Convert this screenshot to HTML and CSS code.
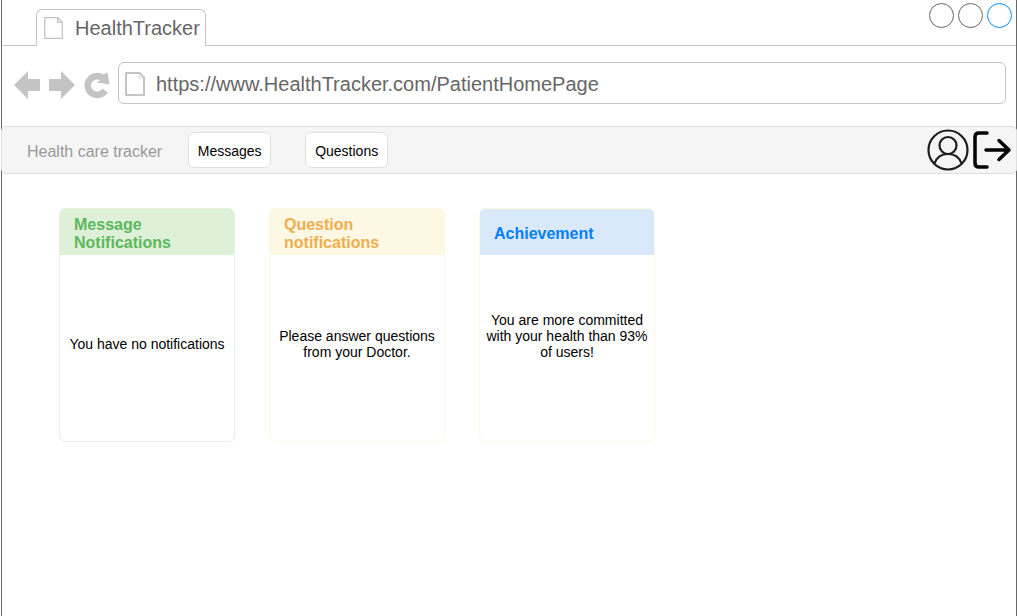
FILE: index.html
```html
<!DOCTYPE html>
<html lang="en">
<head>
<meta charset="utf-8">
<meta name="viewport" content="width=device-width, initial-scale=1">
<title>HealthTracker</title>
<link rel="stylesheet" href="styles.css">
</head>
<body>
<div class="window">
  <header class="tab-strip">
    <div class="tab">
      <svg class="tab-icon" viewBox="0 0 19 22" aria-hidden="true"><path d="M.7.7h13l4.600 4.600v16H.7zM13.700.7v4.600h4.600" fill="none" stroke="#c4c4c4" stroke-width="1.300"/></svg>
      <span>HealthTracker</span>
    </div>
    <div class="window-controls">
      <button class="dot" aria-label="Minimize"></button>
      <button class="dot" aria-label="Maximize"></button>
      <button class="dot dot-close" aria-label="Close"></button>
    </div>
  </header>

  <div class="toolbar">
    <button class="tool" aria-label="Back"><svg class="arrow" viewBox="0 0 26 28"><path d="M0 14 14 0v8h12v12H14v8z" fill="#c4c4c4"/></svg></button>
    <button class="tool" aria-label="Forward"><svg class="arrow" viewBox="0 0 26 28"><path d="M26 14 12 0v8H0v12h12v8z" fill="#c4c4c4"/></svg></button>
    <button class="tool" aria-label="Reload"><svg class="reload" viewBox="0 0 25 27"><path d="M19.500 2.500 23.500.3 25.500 12.500 12.500 10.500 16 8.300A6 6 0 1 0 18.300 16.500L23.800 20.500A12.700 12.700 0 1 1 19.500 2.500z" fill="#c4c4c4"/></svg></button>
    <label class="address">
      <svg class="page-icon" viewBox="0 0 20 24" aria-hidden="true"><path d="M1 1h13.500L19 5.500V23H1z" fill="none" stroke="#c4c4c4" stroke-width="2"/><path d="M14 1v5h5" fill="none" stroke="#c4c4c4" stroke-width=".6"/></svg>
      <input class="address-input" type="text" aria-label="Address" value="https://www.HealthTracker.com/PatientHomePage">
    </label>
  </div>

  <nav class="navbar">
    <span class="brand">Health care tracker</span>
    <div class="nav-buttons">
      <button class="nav-button">Messages</button>
      <button class="nav-button">Questions</button>
    </div>
    <div class="account">
      <button class="tool" aria-label="Profile"><svg class="profile" viewBox="0 0 42 42" fill="none" stroke="#1c1c1c" stroke-width="2.200"><circle cx="21" cy="21" r="19.500"/><circle cx="21" cy="16.500" r="8.500"/><path d="M7.500 34.500C9.500 28.500 14.500 25 21 25s11.500 3.500 13.500 9.500"/></svg></button>
      <button class="tool" aria-label="Log out"><svg class="logout" viewBox="0 0 38 38" fill="none" stroke="#000" stroke-width="3.500" stroke-linecap="round" stroke-linejoin="round"><path d="M14 2H6Q2 2 2 6v26q0 4 4 4h8"/><path d="M13 19h23M26 9.500 36 19l-10 9.500"/></svg></button>
    </div>
  </nav>

  <main class="cards">
    <section class="card card-message">
      <h2 class="card-title">Message Notifications</h2>
      <p class="card-text">You have no notifications</p>
    </section>
    <section class="card card-question">
      <h2 class="card-title">Question notifications</h2>
      <p class="card-text">Please answer questions from your Doctor.</p>
    </section>
    <section class="card card-achievement">
      <h2 class="card-title">Achievement</h2>
      <p class="card-text">You are more committed with your health than 93% of users!</p>
    </section>
  </main>
</div>
</body>
</html>
```
FILE: styles.css
```css
* { box-sizing: border-box; }

body {
  margin: 0;
  background: #fff;
  font-family: "Liberation Sans", Arial, sans-serif;
  color: #000;
}

button { font: inherit; cursor: pointer; }
svg { display: block; overflow: visible; }

.window {
  min-height: 100vh;
  margin-left: 1px;
  border: solid #666;
  border-width: 0 1px;
}

.tab-strip {
  display: flex;
  justify-content: space-between;
  height: 46px;
  padding-left: 34px;
  border-bottom: 1px solid #c4c4c4;
}

.tab {
  display: flex;
  align-items: center;
  gap: 12px;
  margin: 9px 0 -1px;
  padding: 0 5px 0 7px;
  border: 1px solid #c4c4c4;
  border-bottom: 0;
  border-radius: 6px 6px 0 0;
  background: #fff;
  color: #666;
  font-size: 20px;
}

.tab-icon { width: 19px; height: 22px; }

.window-controls {
  display: flex;
  gap: 4px;
  padding: 3px 4px 0 0;
}

.dot {
  width: 25px;
  height: 25px;
  padding: 0;
  border: 1px solid #666;
  border-radius: 50%;
  background: #fff;
}

.dot-close { border-color: #008cff; }

.tool {
  padding: 0;
  border: 0;
  background: none;
}

.toolbar {
  display: flex;
  align-items: center;
  gap: 9px;
  padding: 16px 10px 22px 12px;
}

.toolbar .tool { padding: 4px 0 0; }

.arrow { width: 26px; height: 28px; }
.reload { width: 25px; height: 27px; }

.address {
  display: flex;
  flex: 1;
  align-items: center;
  gap: 11px;
  height: 42px;
  padding: 2px 6px 0;
  border: 1px solid #c4c4c4;
  border-radius: 6px;
}

.page-icon { width: 20px; height: 24px; }

.address-input {
  flex: 1;
  min-width: 0;
  padding: 0;
  border: 0;
  outline: 0;
  background: none;
  color: #666;
  font: 20px "Liberation Sans", Arial, sans-serif;
}

.navbar {
  display: flex;
  align-items: center;
  height: 48px;
  margin: 0 -1px;
  padding: 0 5px 0 25px;
  border: 1px solid #dfdfdf;
  border-radius: 5px;
  background: #f5f5f5;
}

.brand {
  margin-right: 26px;
  padding-top: 3px;
  color: #999;
  font-size: 16px;
}

.nav-buttons { display: flex; gap: 34px; }

.nav-button {
  min-width: 83px;
  height: 36px;
  padding: 2px 8px 0;
  border: 1px solid #dfdfdf;
  border-radius: 6px;
  background: #fff;
  font-size: 14px;
}

.account {
  display: flex;
  align-items: center;
  gap: 4px;
  margin-left: auto;
}

.profile { width: 42px; height: 42px; }
.logout { width: 38px; height: 38px; }

.cards {
  display: flex;
  flex-wrap: wrap;
  gap: 34px;
  padding: 34px 57px;
}

.card {
  display: flex;
  flex-direction: column;
  width: 176px;
  min-height: 234px;
  border: 1px solid;
  border-radius: 6px;
  overflow: hidden;
}

.card-title {
  display: flex;
  align-items: center;
  min-height: 46px;
  margin: 0;
  padding: 7px 14px 3px;
  font-size: 16px;
  line-height: 18px;
}

.card-text {
  display: flex;
  flex: 1;
  align-items: center;
  justify-content: center;
  margin: 0;
  padding: 0 5px 8px;
  font-size: 14px;
  line-height: 16px;
  text-align: center;
}

.card-message { border-color: #e8f1e2; }
.card-message .card-title { background: #dff0d8; color: #5cb85c; }

.card-question { border-color: #fcf8e3; }
.card-question .card-title { background: #fcf8e3; color: #f0ad4e; }

.card-achievement { border-color: #fcf8e3; }
.card-achievement .card-title { background: #dae8fc; color: #007fff; }
.card-achievement .card-text { padding-bottom: 24px; }
```
